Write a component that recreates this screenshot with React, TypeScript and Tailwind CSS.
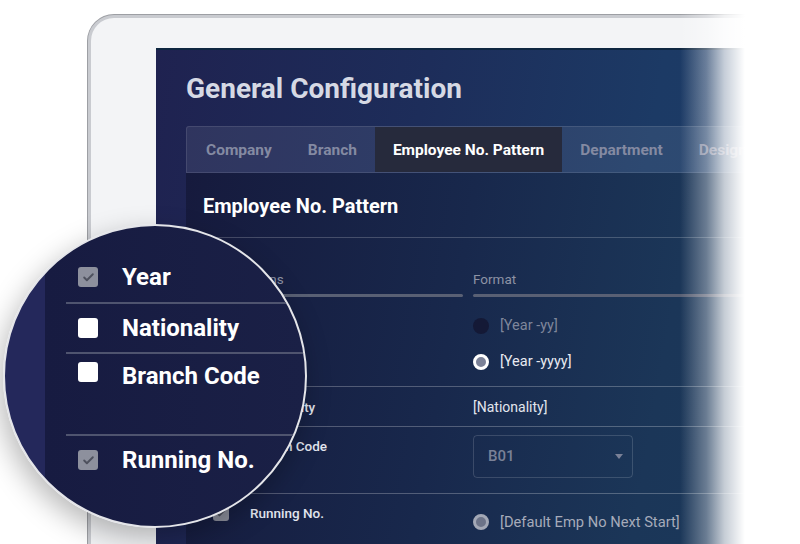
import { Check } from 'lucide-react';

const tabs = ['Company', 'Branch', 'Employee No. Pattern', 'Department', 'Designation'];

function Radio({ state }: { state: 'off' | 'on' | 'muted' }) {
  if (state === 'off') return <span className="w-4 h-4 rounded-full bg-[#141936] shrink-0" />;
  if (state === 'on')
    return <span className="w-4 h-4 rounded-full border-[3px] border-white bg-[#7b8197] shrink-0" />;
  return <span className="w-4 h-4 rounded-full border-[3px] border-[#a3a8b6] bg-[#6c7388] shrink-0" />;
}

function SmallBox({ checked }: { checked?: boolean }) {
  return (
    <span className="w-4 h-4 rounded-[3px] bg-[#8b8e9b] shrink-0 flex items-center justify-center">
      {checked && <Check className="w-3 h-3 text-[#4b4e5b]" strokeWidth={3.5} />}
    </span>
  );
}

function OptionLabel({ checked, label }: { checked?: boolean; label: string }) {
  return (
    <div className="ml-[10px] h-5 flex items-center gap-[21px]">
      <SmallBox checked={checked} />
      <span className="text-[13.5px] font-medium text-[#e2e5ee]">{label}</span>
    </div>
  );
}

function BigBox({ checked }: { checked?: boolean }) {
  return checked ? (
    <span className="w-5 h-5 rounded-[3px] bg-[#8d909d] flex items-center justify-center shrink-0">
      <Check className="w-[13px] h-[13px] text-[#4e515e]" strokeWidth={3.5} />
    </span>
  ) : (
    <span className="w-5 h-5 rounded-[3px] bg-white shrink-0" />
  );
}

function LensRow({ checked, label, className }: { checked?: boolean; label: string; className: string }) {
  return (
    <div className={`flex gap-6 pl-3 ${className}`}>
      <BigBox checked={checked} />
      <span className="text-[24px] leading-[28px] font-bold text-white">{label}</span>
    </div>
  );
}

export default function App() {
  return (
    <div className="relative w-[800px] h-[544px] overflow-hidden bg-white font-['Roboto',sans-serif]">
      {/* tablet frame */}
      <div className="ml-[88px] mt-[15px] w-[760px] h-[580px] rounded-tl-[26px] border-[3px] border-[#c9cbd0] shadow-[0_0_0_1px_#9d9fa4] bg-[#f3f4f6] pl-[65px] pt-[30px]">
        <div className="h-full border-t-2 border-[#0e2640] bg-[linear-gradient(100deg,#1f2250_0%,#1d2d5a_35%,#1c3a65_65%,#1b3e68_100%)] pt-[22px]">
          <h1 className="ml-[30px] text-[28px] leading-[34px] font-bold text-[#d6d9e4]">General Configuration</h1>

          <div className="ml-[30px] mt-[20px]">
            <div className="h-[47px] flex rounded-t-[3px] bg-white/[0.08] border border-white/10">
              {tabs.map((tab, i) => (
                <div
                  key={tab}
                  className={`h-full flex items-center pt-[3px] whitespace-nowrap text-[15.5px] font-bold ${
                    i === 0 ? 'pl-[19px] pr-[18px]' : 'px-[18px]'
                  } ${i === 2 ? 'bg-[#262a3c] text-white' : 'text-[#848aa2]'}`}
                >
                  {tab}
                </div>
              ))}
            </div>

            <div className="h-[400px] bg-[linear-gradient(100deg,#161a3d_0%,#18284c_40%,#1b3658_70%,#1b3a5c_100%)]">
              <h2 className="px-[17px] pt-[21px] pb-[19px] border-b border-white/20 text-[20px] leading-[24px] font-bold text-white">
                Employee No. Pattern
              </h2>

              <div className="px-[17px]">
                <div className="grid grid-cols-[260px_1fr] gap-x-[10px] pt-[32px] text-[13.5px] leading-[18px] text-[#8d93a5]">
                  <div>
                    <div className="pl-[34px]">Options</div>
                    <div className="mt-[6px] h-[3px] rounded-full bg-[#596074]" />
                  </div>
                  <div>
                    <div>Format</div>
                    <div className="mt-[6px] h-[3px] rounded-full bg-[#596074]" />
                  </div>
                </div>

                <div className="grid grid-cols-[260px_1fr] gap-x-[10px] pt-[19px] pb-[14px] border-b border-white/25">
                  <OptionLabel checked label="Year" />
                  <div className="flex flex-col gap-4 text-[14.5px]">
                    <div className="h-5 flex items-center gap-[11px] text-[#7f869b]">
                      <Radio state="off" />
                      [Year -yy]
                    </div>
                    <div className="h-5 flex items-center gap-[11px] text-[#e8eaf1]">
                      <Radio state="on" />
                      [Year -yyyy]
                    </div>
                  </div>
                </div>

                <div className="grid grid-cols-[260px_1fr] gap-x-[10px] pt-[10px] pb-[9px] border-b border-white/25">
                  <OptionLabel label="Nationality" />
                  <div className="h-5 flex items-center text-[14px] text-[#e2e5ed]">[Nationality]</div>
                </div>

                <div className="grid grid-cols-[260px_1fr] gap-x-[10px] pt-[8px] pb-[15px] border-b border-white/25">
                  <div className="pt-[1px]">
                    <OptionLabel label="Branch Code" />
                  </div>
                  <div className="w-[160px] h-[43px] rounded-[4px] border border-white/15 flex items-center justify-between pl-[14px] pr-[9px] text-[15px] font-medium text-[#7a8197]">
                    B01
                    <span className="w-0 h-0 border-x-[4px] border-x-transparent border-t-[5px] border-t-[#7a8197]" />
                  </div>
                </div>

                <div className="grid grid-cols-[260px_1fr] gap-x-[10px]">
                  <div className="pt-[9px]">
                    <OptionLabel checked label="Running No." />
                  </div>
                  <div className="pt-[18px]">
                    <div className="h-5 flex items-center gap-[11px] text-[14.7px] text-[#a6abba]">
                      <Radio state="muted" />
                      [Default Emp No Next Start]
                    </div>
                  </div>
                </div>
              </div>
            </div>
          </div>
        </div>
      </div>

      {/* right fade */}
      <div className="absolute top-0 left-[680px] w-[120px] h-full bg-[linear-gradient(to_right,rgba(255,255,255,0)_0%,rgba(255,255,255,0.35)_22%,rgba(255,255,255,0.75)_37%,#fff_54%)]" />

      {/* magnifier */}
      <div className="absolute left-[3px] top-[224px] w-[304px] h-[304px] rounded-full overflow-hidden border-2 border-[#e4e5e9] shadow-[-4px_10px_28px_rgba(0,0,0,0.28)] bg-[linear-gradient(to_right,#24285b_0px,#24285b_40px,#171b41_40px,#1a2046_100%)] pt-[26px] pl-[61px]">
        <LensRow checked label="Year" className="h-[50px] items-center" />
        <div className="w-[300px] h-[2px] bg-[#4f546f]" />
        <LensRow label="Nationality" className="h-[48px] items-center" />
        <div className="w-[300px] h-[2px] bg-[#4f546f]" />
        <LensRow label="Branch Code" className="h-[80px] items-start pt-[8px]" />
        <div className="w-[300px] h-[2px] bg-[#4f546f]" />
        <LensRow checked label="Running No." className="h-[48px] items-center" />
      </div>
    </div>
  );
}
